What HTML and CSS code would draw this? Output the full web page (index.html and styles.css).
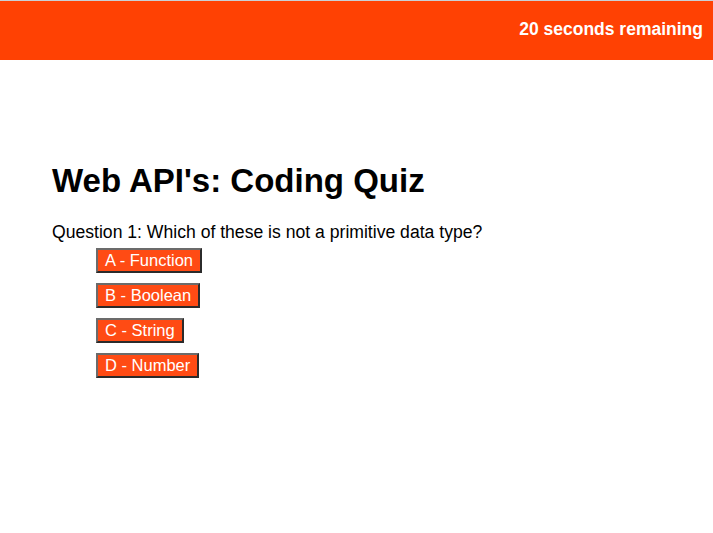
FILE: index.html
```html
<!DOCTYPE html>
<html>
<head>
<meta charset="utf-8">
<link rel="stylesheet" href="styles.css">
</head>
<body>
<header class="topbar">
  <span class="timer">20 seconds remaining</span>
</header>
<main class="quiz">
  <h1 class="title">Web API's: Coding Quiz</h1>
  <p class="question">Question 1: Which of these is not a primitive data type?</p>
  <ul class="answers">
    <li><button class="answer">A - Function</button></li>
    <li><button class="answer">B - Boolean</button></li>
    <li><button class="answer">C - String</button></li>
    <li><button class="answer">D - Number</button></li>
  </ul>
</main>
</body>
</html>
```
FILE: styles.css
```css
html, body {
  margin: 0;
  padding: 0;
  background: #fff;
  font-family: "Liberation Sans", Arial, sans-serif;
  color: #000;
}
.topbar {
  border-top: 1px solid #c9d0d6;
  height: 59px;
  background: #ff4103;
  display: flex;
  align-items: center;
  justify-content: flex-end;
  padding-right: 10px;
}
.timer {
  color: #fff;
  font-weight: bold;
  font-size: 17.5px;
  margin-top: -2px;
}
.quiz {
  padding: 102px 52px 0;
}
.title {
  font-size: 33px;
  font-weight: bold;
  margin: 0 0 24px;
  line-height: 37px;
}
.question {
  margin: 0 0 6px;
  font-size: 17.6px;
  line-height: 19px;
}
.answers {
  list-style: none;
  margin: 0;
  padding: 0 0 0 44px;
  display: flex;
  flex-direction: column;
  align-items: flex-start;
  gap: 10px;
}
.answer {
  font-family: "Liberation Sans", Arial, sans-serif;
  font-size: 16.5px;
  line-height: 19px;
  color: #fff;
  background: #ff4b14;
  border: 2px solid;
  border-color: #6b6b6b #2b2b2b #2b2b2b #6b6b6b;
  padding: 1px 7px;
  margin: 0;
}
```
